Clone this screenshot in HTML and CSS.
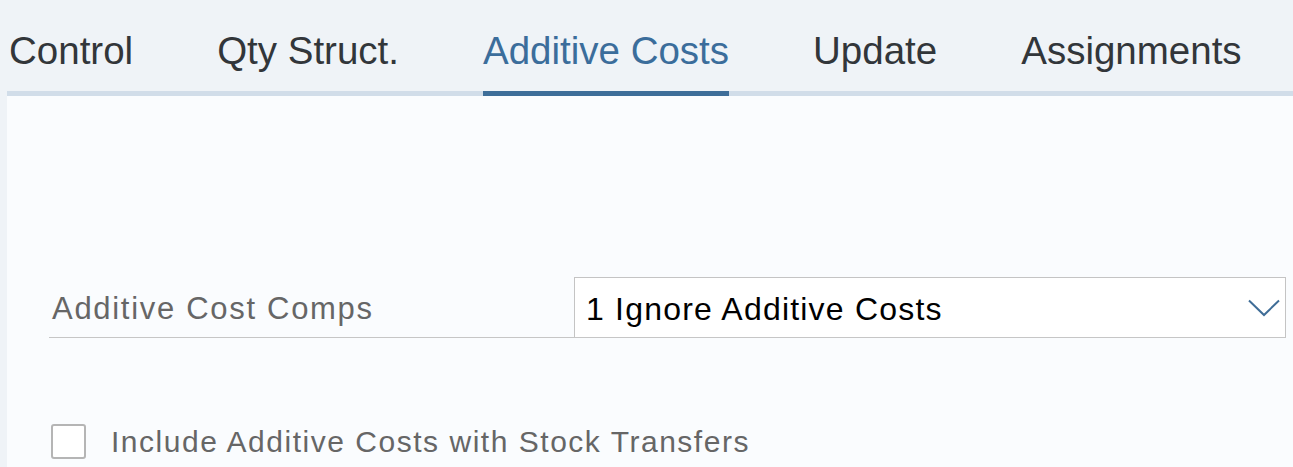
FILE: index.html
```html
<!DOCTYPE html>
<html lang="en">
<head>
<meta charset="utf-8">
<title>Additive Costs</title>
<link rel="stylesheet" href="styles.css">
</head>
<body>
<div class="page">
  <nav class="tabs">
    <div class="tab">Control</div>
    <div class="tab">Qty Struct.</div>
    <div class="tab active">Additive Costs</div>
    <div class="tab">Update</div>
    <div class="tab">Assignments</div>
  </nav>
  <main class="panel">
    <div class="form-row">
      <label class="field-label">Additive Cost Comps</label>
      <div class="select">
        <span class="select-text">1 Ignore Additive Costs</span>
        <svg class="chevron" width="32" height="18" viewBox="0 0 32 18" aria-hidden="true">
          <path d="M1 1.5 L16 16 L31 1.5" fill="none" stroke="#3f6d97" stroke-width="2"/>
        </svg>
      </div>
    </div>
    <div class="check-row">
      <span class="checkbox"></span>
      <span class="check-label">Include Additive Costs with Stock Transfers</span>
    </div>
  </main>
</div>
</body>
</html>
```

FILE: styles.css
```css
html, body {
  margin: 0;
  padding: 0;
}
body {
  background: #eff3f7;
  font-family: "Liberation Sans", Arial, sans-serif;
  overflow: hidden;
}
.page {
  width: 1293px;
  height: 467px;
  display: flex;
  flex-direction: column;
}
.tabs {
  margin-left: 7px;
  padding-left: 2px;
  display: flex;
  gap: 84px;
  box-shadow: inset 0 -5px 0 #d1dde9;
  height: 96px;
  box-sizing: border-box;
}
.tab {
  font-size: 38.5px;
  line-height: 44px;
  padding-top: 29px;
  padding-bottom: 23px;
  color: #32363a;
  white-space: nowrap;
}
.tab.active {
  color: #3b6d9b;
  box-shadow: inset 0 -5px 0 #3e6e99;
}
.panel {
  flex: 1;
  margin-left: 7px;
  background: #fafcfe;
  padding: 181px 7px 0 42px;
}
.form-row {
  display: flex;
  border-bottom: 1px solid #c6c6c6;
  box-sizing: border-box;
  height: 61px;
}
.field-label {
  width: 525px;
  flex: none;
  padding-left: 3px;
  font-size: 31px;
  letter-spacing: 1.7px;
  color: #666666;
  display: flex;
  align-items: center;
  padding-top: 3px;
  box-sizing: border-box;
}
.select {
  flex: 1;
  display: flex;
  align-items: center;
  justify-content: space-between;
  border: 1px solid #c4c4c4;
  border-bottom: none;
  background: #ffffff;
  padding: 3px 5px 0 11px;
}
.select-text {
  font-size: 32px;
  letter-spacing: 1.2px;
  color: #000000;
}
.chevron {
  display: block;
  margin-top: -2px;
}
.check-row {
  display: flex;
  align-items: center;
  gap: 25px;
  margin-top: 86px;
  padding-left: 2px;
}
.checkbox {
  width: 35px;
  height: 35px;
  box-sizing: border-box;
  border: 2px solid #b5b5b5;
  border-radius: 3px;
  background: #ffffff;
  flex: none;
}
.check-label {
  font-size: 30px;
  letter-spacing: 1.52px;
  color: #666666;
}
```
